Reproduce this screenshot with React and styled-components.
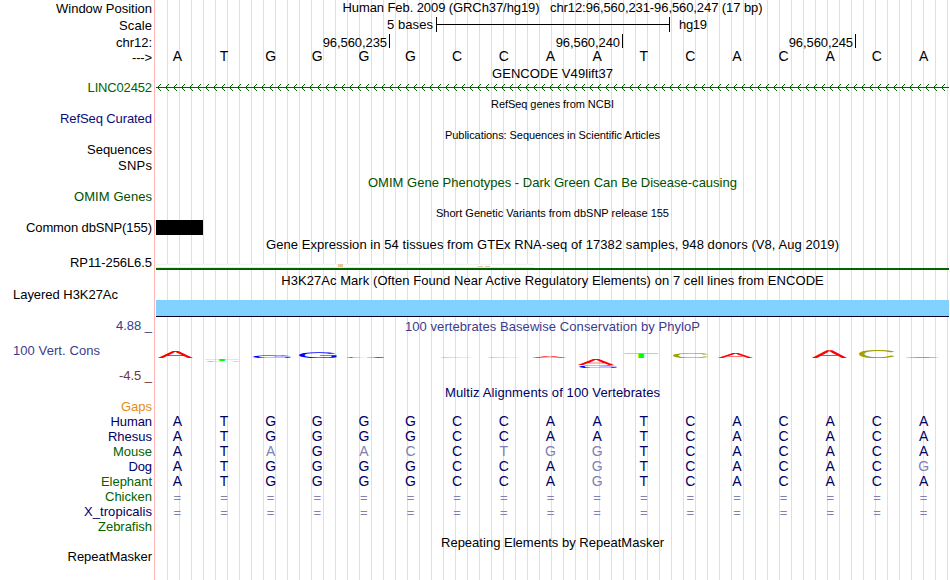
import React, { useLayoutEffect, useRef, useState } from 'react';
import styled, { createGlobalStyle } from 'styled-components';

const GlobalStyle = createGlobalStyle`
  * { box-sizing: border-box; }
  body { margin: 0; background: #fff; }
`;

const BLACK = '#000';
const NAVY = '#000064';
const GREEN = '#006400';
const SLATE = '#3c3c8c';
const PALE = '#8080b2';

const Browser = styled.main`
  display: grid;
  grid-template-columns: 154px 1px 1px 793px;
  width: 950px;
  height: 580px;
  overflow: hidden;
  background: #fff;
  font: 13px/15px 'Liberation Sans', Arial, sans-serif;
  color: #000;
  white-space: pre;
`;

const Labels = styled.div`
  display: flex;
  flex-direction: column;
  padding: 0 2px 0 13px;
`;

const Label = styled.div`
  display: flex;
  flex: none;
  align-items: flex-end;
  justify-content: ${(p) => (p.$left ? 'flex-start' : 'flex-end')};
  height: ${(p) => p.$h}px;
  color: ${(p) => p.$color || BLACK};
`;

const Divider = styled.div`
  grid-column: 2;
  background: #ffb4b4;
`;

const Plot = styled.div`
  grid-column: 4;
  display: flex;
  flex-direction: column;
  min-width: 0;
  background: repeating-linear-gradient(90deg, transparent 0 11px, #dcdcf6 11px 12px);
`;

const Title = styled.div`
  display: flex;
  flex: none;
  align-items: flex-end;
  justify-content: center;
  height: ${(p) => p.$h}px;
  font-size: ${(p) => (p.$small ? 11 : 13)}px;
  line-height: ${(p) => (p.$small ? 13 : 15)}px;
  color: ${(p) => p.$color || BLACK};
`;

const Space = styled.div`
  flex: none;
  height: ${(p) => p.$h}px;
`;

const ScaleRow = styled.div`
  display: flex;
  flex: none;
  height: 17px;
  padding-left: 231px;
`;

const ScaleText = styled.span`
  padding-top: 2px;
`;

const ScaleBar = styled.div`
  width: 234px;
  height: 15px;
  margin: 2px 9px 0 3px;
  border: solid #000;
  border-width: 0 1px;
  background: linear-gradient(#000, #000) 0 7px / 100% 1px no-repeat;
`;

const RulerRow = styled.div`
  display: grid;
  flex: none;
  grid-template-columns: 234px 233px 233px;
  height: 16px;
`;

const Tick = styled.div`
  height: 14px;
  margin-top: 2px;
  padding: 1px 2px 0 0;
  border-right: 1px solid #000;
  text-align: right;
`;

const Bases = styled.div`
  display: grid;
  flex: none;
  grid-template-columns: repeat(17, 46.65px);
  height: 15px;
  margin-left: -2px;
  text-align: center;
  color: ${(p) => p.$color};
`;

const Base = styled.span`
  color: ${(p) => (p.$pale ? PALE : 'inherit')};
  padding-top: ${(p) => (p.$gap ? 1 : 0)}px;
  font-size: ${(p) => (p.$gap ? 13 : 14)}px;
`;

const Drawing = styled.svg`
  display: block;
  flex: none;
  width: 793px;
  height: ${(p) => p.$h}px;
`;

const Variant = styled.div`
  flex: none;
  width: 47px;
  height: 15px;
  background: #000;
`;

const Signal = styled.div`
  flex: none;
  height: 17px;
  background: #82d2ff;
  border-bottom: 1px solid #000028;
`;

/* Tracks a run of text so that it spans the given advance width. */
function Fit({ w, children }) {
  const ref = useRef(null);
  const [spacing, setSpacing] = useState(0);
  useLayoutEffect(() => {
    const natural = ref.current.getBoundingClientRect().width;
    setSpacing((w - natural) / (children.length - 1));
  }, [w, children]);
  return (
    <span ref={ref} style={{ letterSpacing: `${spacing}px`, marginRight: `${-spacing}px` }}>
      {children}
    </span>
  );
}

const labels = [
  { t: 'Window Position', h: 16, w: 96 },
  { t: 'Scale', h: 17, w: 33 },
  { t: 'chr12:', h: 17, w: 36 },
  { t: '--->', h: 15, w: 20 },
  { t: 'LINC02452', h: 30, w: 64.4, c: GREEN },
  { t: 'RefSeq Curated', h: 31, w: 92, c: '#0c0c78' },
  { t: 'Sequences', h: 31, w: 65 },
  { t: 'SNPs', h: 16, w: 34 },
  { t: 'OMIM Genes', h: 31, w: 78, c: '#005000' },
  { t: 'Common dbSNP(155)', h: 31, w: 126 },
  { t: 'RP11-256L6.5', h: 35, w: 82 },
  { t: 'Layered H3K27Ac', h: 32, w: 105, left: true },
  { t: '4.88 _', h: 31, w: 36, c: SLATE },
  { t: '100 Vert. Cons', h: 25, w: 87, c: SLATE, left: true },
  { t: '-4.5 _', h: 25, w: 33, c: '#783232' },
  { t: 'Gaps', h: 31, w: 31, c: '#e68c14' },
  { t: 'Human', h: 15, w: 41.5, c: NAVY },
  { t: 'Rhesus', h: 15, w: 44, c: NAVY },
  { t: 'Mouse', h: 15, w: 39, c: GREEN },
  { t: 'Dog', h: 15, w: 23.5, c: NAVY },
  { t: 'Elephant', h: 15, w: 51, c: GREEN },
  { t: 'Chicken', h: 15, w: 47, c: GREEN },
  { t: 'X_tropicalis', h: 15, w: 68, c: NAVY },
  { t: 'Zebrafish', h: 15, w: 54, c: GREEN },
  { t: 'RepeatMasker', h: 30, w: 84.5 },
];

const REFERENCE = 'ATGGGGCCAATCACACA';
const GAPS = '=================';

/* Upper case marks a base equal to the human one, lower case a substitution. */
const alignments = [
  REFERENCE,
  REFERENCE,
  'ATaGacCtggTCACACA',
  'ATGGGGCCAgTCACACg',
  'ATGGGGCCAgTCACACA',
  GAPS,
  GAPS,
];

function Sequence({ letters, color }) {
  return (
    <Bases $color={color}>
      {[...letters].map((ch, i) => (
        <Base key={i} $pale={ch === '=' || ch !== ch.toUpperCase()} $gap={ch === '='}>
          {ch.toUpperCase()}
        </Base>
      ))}
    </Bases>
  );
}

/* Ink box of each logo letter at a 100px font size: left, width, descent, height. */
const ink = {
  A: [0.3, 66, 0, 69],
  C: [5, 64, 1, 71],
  G: [5, 66.5, 1, 71],
  T: [2, 56.5, 0, 69],
};
const logoColor = { A: '#ff0000', C: '#a0a000', G: '#0000ff', T: '#00ff00' };

/* letter, left, width, top, bottom */
const logo = [
  ['A', 2, 35, 3, 10],
  ['T', 49, 34, 11.3, 13.4],
  ['C', 50, 35, 13, 13.8],
  ['G', 97, 38, 7.3, 10],
  ['G', 143, 38, 4.2, 10],
  ['G', 190, 38, 9.1, 9.9],
  ['C', 283, 35, 9.2, 9.9],
  ['C', 330, 35, 9.2, 9.9],
  ['A', 376, 35, 8, 10],
  ['A', 422, 36, 11, 17],
  ['G', 423, 38, 17.2, 20],
  ['T', 468, 34, 5.2, 10],
  ['C', 517, 36, 5, 10.1],
  ['A', 562, 35, 5, 10],
  ['A', 656, 35, 2.3, 10],
  ['C', 703, 36, 2, 10.1],
  ['A', 749, 35, 9, 10],
];

function LogoLetter({ ch, x, w, top, bottom }) {
  const [l, iw, d, ih] = ink[ch];
  return (
    <text
      fontSize="100"
      fill={logoColor[ch]}
      transform={`translate(${x} ${bottom}) scale(${w / iw} ${(bottom - top) / ih}) translate(${-l} ${-d})`}
    >
      {ch}
    </text>
  );
}

export default function App() {
  return (
    <>
      <GlobalStyle />
      <Browser>
        <Labels>
          {labels.map((l) => (
            <Label key={l.t} $h={l.h} $color={l.c} $left={l.left}>
              <Fit w={l.w}>{l.t}</Fit>
            </Label>
          ))}
        </Labels>
        <Divider />
        <Plot>
          <Title $h={15}>
            <Fit w={420}>{'Human Feb. 2009 (GRCh37/hg19)   chr12:96,560,231-96,560,247 (17 bp)'}</Fit>
          </Title>
          <ScaleRow>
            <ScaleText><Fit w={46}>5 bases</Fit></ScaleText>
            <ScaleBar />
            <ScaleText><Fit w={28}>hg19</Fit></ScaleText>
          </ScaleRow>
          <RulerRow>
            <Tick><Fit w={64.4}>96,560,235</Fit></Tick>
            <Tick><Fit w={64.4}>96,560,240</Fit></Tick>
            <Tick><Fit w={64.4}>96,560,245</Fit></Tick>
          </RulerRow>
          <Space $h={1} />
          <Sequence letters={REFERENCE} color={BLACK} />
          <Title $h={17}><Fit w={121}>GENCODE V49lift37</Fit></Title>
          <Space $h={3} />
          <Drawing $h={7} shapeRendering="crispEdges">
            <defs>
              <pattern id="strand" width="8" height="7" patternUnits="userSpaceOnUse">
                <path
                  fill={GREEN}
                  d="M0 3h8v1H0zM2 2h1v1H2zM2 4h1v1H2zM3 1h1v1H3zM3 5h1v1H3zM4 0h1v1H4zM4 6h1v1H4z"
                />
              </pattern>
            </defs>
            <rect width="793" height="7" fill="url(#strand)" />
          </Drawing>
          <Title $h={20} $small><Fit w={123}>RefSeq genes from NCBI</Fit></Title>
          <Title $h={31} $small><Fit w={215}>Publications: Sequences in Scientific Articles</Fit></Title>
          <Title $h={48} $color="#005000">
            <Fit w={369}>OMIM Gene Phenotypes - Dark Green Can Be Disease-causing</Fit>
          </Title>
          <Title $h={30} $small><Fit w={233}>Short Genetic Variants from dbSNP release 155</Fit></Title>
          <Variant />
          <Title $h={17}>
            <Fit w={573}>Gene Expression in 54 tissues from GTEx RNA-seq of 17382 samples, 948 donors (V8, Aug 2019)</Fit>
          </Title>
          <Space $h={12} />
          <Drawing $h={6} shapeRendering="crispEdges">
            <rect width="378" height="4" fill="#fff" />
            <rect width="378" height="1" fill="#f0f5f0" />
            <rect y="3" width="378" height="1" fill="#ebe6eb" />
            <rect x="182" width="5" height="3" fill="#f0c391" />
            <rect x="322" y="2" width="5" height="1" fill="#e6c3aa" />
            <rect x="329" y="2" width="5" height="1" fill="#e6c3aa" />
            <rect y="4" width="793" height="2" fill={GREEN} />
          </Drawing>
          <Title $h={18}>
            <Fit w={542.6}>H3K27Ac Mark (Often Found Near Active Regulatory Elements) on 7 cell lines from ENCODE</Fit>
          </Title>
          <Space $h={12} />
          <Signal />
          <Title $h={17} $color={SLATE}>
            <Fit w={295}>100 vertebrates Basewise Conservation by PhyloP</Fit>
          </Title>
          <Space $h={14} />
          <Drawing $h={24} textRendering="geometricPrecision">
            {logo.map(([ch, x, w, top, bottom], i) => (
              <LogoLetter key={i} ch={ch} x={x} w={w} top={top} bottom={bottom} />
            ))}
          </Drawing>
          <Title $h={28} $color={NAVY}><Fit w={215}>Multiz Alignments of 100 Vertebrates</Fit></Title>
          <Space $h={14} />
          {alignments.map((letters, i) => (
            <Sequence key={i} letters={letters} color={NAVY} />
          ))}
          <Title $h={31}><Fit w={223}>Repeating Elements by RepeatMasker</Fit></Title>
        </Plot>
      </Browser>
    </>
  );
}
